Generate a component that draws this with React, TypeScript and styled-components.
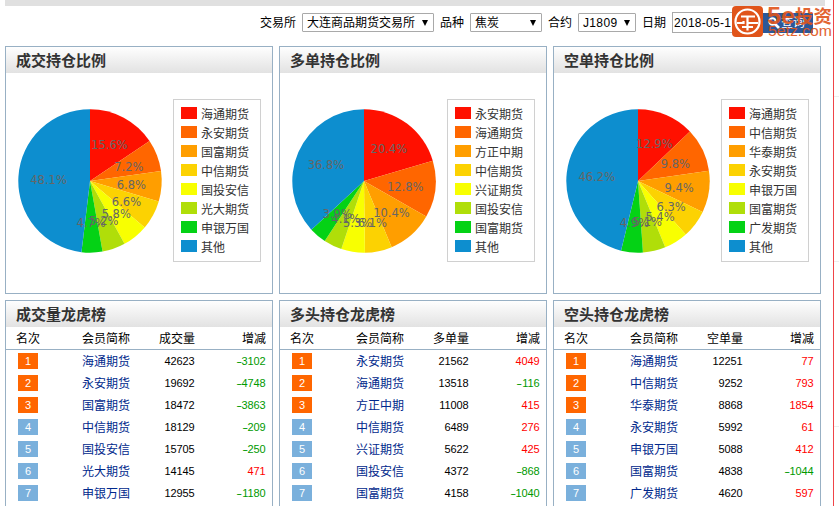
import React from "react";
import styled, { createGlobalStyle } from "styled-components";

const GlobalStyle = createGlobalStyle`
  * { box-sizing: border-box; }
  body {
    margin: 0;
    background: #fff;
    color: #000;
    overflow: hidden;
    font: 12px/16px "Liberation Sans", "Noto Sans CJK SC", sans-serif;
  }
`;

const Page = styled.div`
  position: relative;
  display: flex;
  width: 839px;
  height: 506px;
  overflow: hidden;
`;
const Main = styled.main`
  width: 834px;
  padding-left: 5px;
  border-right: 1px solid #f04448;
  flex: none;
`;
const Margin = styled.aside`
  flex: 1;
  padding-top: 96px;
`;
const Rule = styled.div<{ $gap: number }>`
  height: 1px;
  background: #eee;
  margin-bottom: ${(p) => p.$gap}px;
`;
const TopStrip = styled.div`
  width: 820px;
  height: 6px;
  background: #e0e0e0;
`;
const Toolbar = styled.form`
  display: flex;
  align-items: center;
  height: 40px;
  padding: 0 0 7px 255px;
`;
const FieldLabel = styled.label<{ $width: number }>`
  width: ${(p) => p.$width}px;
  flex: none;
  padding-top: 1px;
  white-space: nowrap;
`;
const SelectBox = styled.div<{ $width: number }>`
  display: flex;
  align-items: center;
  justify-content: space-between;
  flex: none;
  width: ${(p) => p.$width}px;
  height: 19px;
  margin-right: 6px;
  padding: 0 5px 0 4px;
  border: 1px solid #a9a9a9;
  border-radius: 1px;
  white-space: nowrap;
`;
const Latin = styled.span`
  letter-spacing: 0.35px;
`;
const Arrow = styled.i`
  border: 3px solid transparent;
  border-top: 6px solid #000;
  border-bottom: 0;
`;
const DateBox = styled.div`
  flex: none;
  width: 88px;
  height: 21px;
  padding: 2px 0 0 1px;
  border: 1px solid #a9a9a9;
  letter-spacing: 0.28px;
`;
const SearchButton = styled.button`
  display: flex;
  align-items: center;
  justify-content: flex-end;
  gap: 1px;
  flex: none;
  width: 53px;
  height: 20px;
  padding: 0 8px 0 0;
  border: 0;
  background: #2c5898;
  color: #fff;
  font: inherit;
  white-space: nowrap;
`;
const Watermark = styled.div`
  position: absolute;
  left: 732px;
  top: 6px;
  display: flex;
  gap: 4px;
  color: #e0541a;
`;
const MarkText = styled.svg`
  opacity: 0.9;
  overflow: visible;
`;

const Columns = styled.div`
  display: grid;
  grid-template-columns: repeat(3, 268px);
  gap: 6px;
`;
const Panel = styled.section<{ $height: number }>`
  height: ${(p) => p.$height}px;
  border: 1px solid #98b0c4;
`;
const PanelTitle = styled.h2`
  height: 26px;
  margin: 0;
  padding: 1px 0 0 10px;
  background: linear-gradient(#fefefe, #e2e2e2);
  color: #333;
  font-size: 15px;
  line-height: 25px;
  font-weight: 700;
`;
const ChartArea = styled.div`
  display: flex;
  align-items: flex-start;
  padding: 26px 0 0 12px;
`;
const Pie = styled.svg`
  display: block;
  width: 146px;
  height: 146px;
  margin: 9px 9px 0 0;
  text {
    font-family: "DejaVu Sans", sans-serif;
    font-weight: 400;
    font-size: 11.5px;
    fill: #666;
    text-anchor: middle;
  }
`;
const Legend = styled.ul`
  list-style: none;
  width: 88px;
  height: 163px;
  margin: 0;
  padding: 5px 0 0 7px;
  border: 1px solid #d0d0d0;
  color: #333;
`;
const LegendItem = styled.li`
  display: flex;
  align-items: center;
  gap: 4px;
  height: 19px;
  white-space: nowrap;
`;
const Swatch = styled.i<{ $color: string }>`
  width: 16px;
  height: 12px;
  margin-top: -3px;
  background: ${(p) => p.$color};
`;

const rowColumns = "38px 76px 65px 1fr";
const HeadRow = styled.div`
  display: grid;
  grid-template-columns: ${rowColumns};
  align-items: center;
  height: 23px;
  padding: 1px 6px 0 10px;
  border-bottom: 1px solid #98b0c4;
`;
const Row = styled(HeadRow)`
  height: 22px;
  padding-top: 0;
  border: 0;
`;
const Badge = styled.span<{ $top: boolean }>`
  width: 20px;
  height: 16px;
  margin-left: 2px;
  background: ${(p) => (p.$top ? "#f60" : "#7ab0dc")};
  color: #fff;
  font-size: 11px;
  text-align: center;
`;
const Name = styled.span`
  padding: 1px 0 0 28px;
  color: #00288c;
  white-space: nowrap;
`;
const HeadName = styled(Name)`
  padding-top: 0;
  color: #000;
`;
const HeadCell = styled.span`
  text-align: right;
`;
const Num = styled.span<{ $tone?: "up" | "down" }>`
  text-align: right;
  font-size: 11px;
  letter-spacing: -0.12px;
  padding-right: 0.5px;
  color: ${(p) => (p.$tone === "up" ? "#f00" : p.$tone === "down" ? "#090" : "#000")};
`;
const Sign = styled.span`
  display: inline-block;
  width: 6px;
  transform: scaleX(1.6);
  text-align: center;
`;

const colors = ["#ff1000", "#ff6600", "#ff9e00", "#fcd202", "#f8ff01", "#b0de09", "#04d215", "#0d8ecf"];

type Slice = [string, number];
const pies: { title: string; data: Slice[] }[] = [
  { title: "成交持仓比例", data: [["海通期货", 15.6], ["永安期货", 7.2], ["国富期货", 6.8], ["中信期货", 6.6], ["国投安信", 5.8], ["光大期货", 5.2], ["申银万国", 4.7], ["其他", 48.1]] },
  { title: "多单持仓比例", data: [["永安期货", 20.4], ["海通期货", 12.8], ["方正中期", 10.4], ["中信期货", 6.1], ["兴证期货", 5.3], ["国投安信", 4.1], ["国富期货", 3.9], ["其他", 36.8]] },
  { title: "空单持仓比例", data: [["海通期货", 12.9], ["中信期货", 9.8], ["华泰期货", 9.4], ["永安期货", 6.3], ["申银万国", 5.4], ["国富期货", 5.1], ["广发期货", 4.9], ["其他", 46.2]] },
];

type Entry = [string, number, number];
const boards: { title: string; unit: string; rows: Entry[] }[] = [
  { title: "成交量龙虎榜", unit: "成交量", rows: [["海通期货", 42623, -3102], ["永安期货", 19692, -4748], ["国富期货", 18472, -3863], ["中信期货", 18129, -209], ["国投安信", 15705, -250], ["光大期货", 14145, 471], ["申银万国", 12955, -1180]] },
  { title: "多头持仓龙虎榜", unit: "多单量", rows: [["永安期货", 21562, 4049], ["海通期货", 13518, -116], ["方正中期", 11008, 415], ["中信期货", 6489, 276], ["兴证期货", 5622, 425], ["国投安信", 4372, -868], ["国富期货", 4158, -1040]] },
  { title: "空头持仓龙虎榜", unit: "空单量", rows: [["海通期货", 12251, 77], ["中信期货", 9252, 793], ["华泰期货", 8868, 1854], ["永安期货", 5992, 61], ["申银万国", 5088, 412], ["国富期货", 4838, -1044], ["广发期货", 4620, 597]] },
];

function PieChart({ data }: { data: Slice[] }) {
  const total = data.reduce((sum, [, v]) => sum + v, 0);
  const at = (share: number, r: number) => {
    const a = (share / total) * Math.PI * 2;
    return [72 + r * Math.sin(a), 73 - r * Math.cos(a)];
  };
  let start = 0;
  const slices = data.map(([name, value], i) => {
    const from = start;
    start += value;
    const [x1, y1] = at(from, 71.7);
    const [x2, y2] = at(start, 71.7);
    const [tx, ty] = at(from + value / 2, 41.5);
    const large = value / total > 0.5 ? 1 : 0;
    return { name, value, color: colors[i], tx, ty, d: `M72 73L${x1} ${y1}A71.7 71.7 0 ${large} 1 ${x2} ${y2}Z` };
  });
  return (
    <Pie viewBox="0 0 146 146">
      {slices.map((s) => <path key={s.name} d={s.d} fill={s.color} />)}
      {slices.map((s) => <text key={s.name} x={s.tx} y={s.ty + 5}>{s.value.toFixed(1)}%</text>)}
    </Pie>
  );
}

export default function App() {
  return (
    <Page>
      <GlobalStyle />
      <Main>
        <TopStrip />
        <Toolbar>
          <FieldLabel $width={42}>交易所</FieldLabel>
          <SelectBox $width={132}>大连商品期货交易所<Arrow /></SelectBox>
          <FieldLabel $width={30}>品种</FieldLabel>
          <SelectBox $width={72}>焦炭<Arrow /></SelectBox>
          <FieldLabel $width={30}>合约</FieldLabel>
          <SelectBox $width={58}><Latin>J1809</Latin><Arrow /></SelectBox>
          <FieldLabel $width={30}>日期</FieldLabel>
          <DateBox>2018-05-1</DateBox>
          <SearchButton type="button">
            <svg width="12" height="12" viewBox="0 0 12 12" fill="none" stroke="#fff" strokeWidth="2">
              <circle cx="4.5" cy="4.5" r="3.2" />
              <path d="M7 7l4 4" strokeWidth="2.6" />
            </svg>
            查询
          </SearchButton>
        </Toolbar>
        <Columns>
          {pies.map((p) => (
            <Panel key={p.title} $height={248}>
              <PanelTitle>{p.title}</PanelTitle>
              <ChartArea>
                <PieChart data={p.data} />
                <Legend>
                  {p.data.map(([name], i) => (
                    <LegendItem key={name}><Swatch $color={colors[i]} />{name}</LegendItem>
                  ))}
                </Legend>
              </ChartArea>
            </Panel>
          ))}
          {boards.map((b) => (
            <Panel key={b.title} $height={240}>
              <PanelTitle>{b.title}</PanelTitle>
              <HeadRow>
                <span>名次</span>
                <HeadName>会员简称</HeadName>
                <HeadCell>{b.unit}</HeadCell>
                <HeadCell>增减</HeadCell>
              </HeadRow>
              {b.rows.map(([name, amount, change], i) => (
                <Row key={name}>
                  <Badge $top={i < 3}>{i + 1}</Badge>
                  <Name>{name}</Name>
                  <Num>{amount}</Num>
                  <Num $tone={change > 0 ? "up" : "down"}>
                    {change < 0 && <Sign>-</Sign>}{Math.abs(change)}
                  </Num>
                </Row>
              ))}
            </Panel>
          ))}
        </Columns>
      </Main>
      <Margin>
        <Rule $gap={164} />
        <Rule $gap={164} />
        <Rule $gap={0} />
      </Margin>
      <Watermark>
        <svg width="32" height="31" viewBox="0 0 32 31">
          <rect width="31" height="31" rx="4" fill="#e0541a" />
          <g fill="none" stroke="#fff" strokeWidth="2.2">
            <circle cx="15.5" cy="15.5" r="12" />
            <path d="M9 10.5h14M15.5 10.5v14M5 17h6.5v-2M26 17h-10.5M10 21h11" />
          </g>
        </svg>
        <MarkText width="67" height="33" viewBox="0 0 67 33" fill="#e0541a">
          <text x="-1" y="18" fontSize="24" fontWeight="700" textLength="28" lengthAdjust="spacingAndGlyphs">5e</text>
          <text x="27" y="17" fontSize="18" fontWeight="700" textLength="37" lengthAdjust="spacingAndGlyphs">投资</text>
          <text x="0" y="30" fontSize="14" textLength="64" lengthAdjust="spacingAndGlyphs">5etz.com</text>
        </MarkText>
      </Watermark>
    </Page>
  );
}
